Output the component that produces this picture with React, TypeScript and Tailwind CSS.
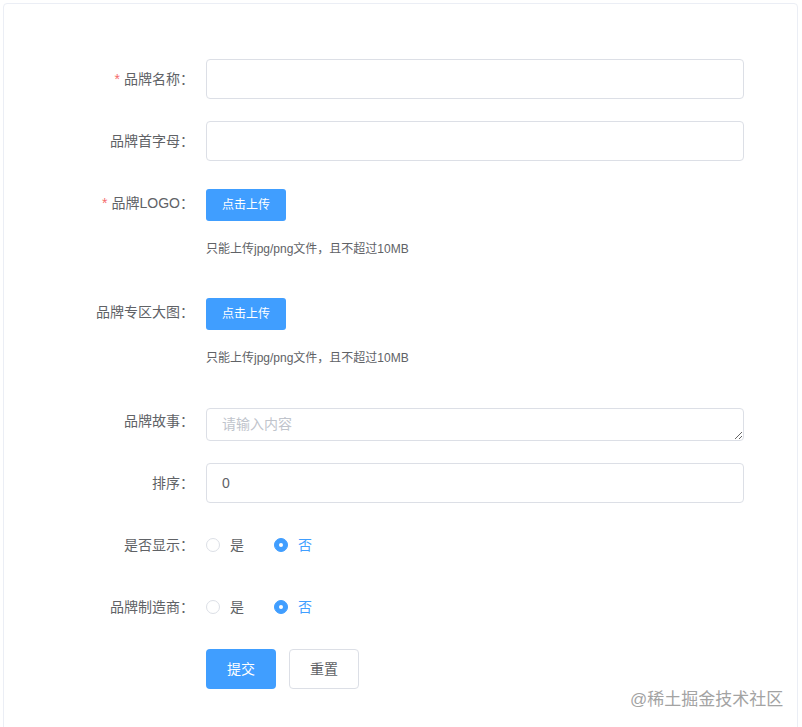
import React, { useState } from 'react'

const font = { fontFamily: '"Liberation Sans", "Noto Sans CJK SC", sans-serif' }

const Label: React.FC<{ text: string; required?: boolean }> = ({ text, required }) => (
  <label className="w-[150px] shrink-0 pr-3 text-right text-sm leading-[40px] text-[#606266]">
    {required && <span className="mr-1 text-[#f56c6c]">*</span>}
    {text}
  </label>
)

const TextInput: React.FC<{ value?: string }> = ({ value }) => (
  <input
    defaultValue={value}
    className="h-10 w-full rounded-[4px] border border-[#dcdfe6] px-[15px] text-sm text-[#606266] outline-none"
  />
)

const Upload: React.FC = () => (
  <div className="pt-[6px] pb-3">
    <button className="h-8 w-20 rounded-[3px] bg-[#409eff] text-xs text-white">点击上传</button>
    <div className="mt-[19px] text-xs leading-[18px] text-[#606266]">只能上传jpg/png文件，且不超过10MB</div>
  </div>
)

const RadioGroup: React.FC<{ initial: boolean }> = ({ initial }) => {
  const [val, setVal] = useState(initial)
  const opts = [
    { label: '是', v: true },
    { label: '否', v: false },
  ]
  return (
    <div className="flex h-10 items-center gap-[30px]">
      {opts.map((o) => {
        const on = val === o.v
        return (
          <button key={o.label} className="flex items-center" onClick={() => setVal(o.v)}>
            {on ? (
              <span className="flex h-[14px] w-[14px] items-center justify-center rounded-full border border-[#409eff] bg-[#409eff]">
                <span className="h-1 w-1 rounded-full bg-white" />
              </span>
            ) : (
              <span className="h-[14px] w-[14px] rounded-full border border-[#dcdfe6] bg-white" />
            )}
            <span className={'pl-[10px] text-sm ' + (on ? 'text-[#409eff]' : 'text-[#606266]')}>{o.label}</span>
          </button>
        )
      })}
    </div>
  )
}

export default function App() {
  return (
    <div className="relative min-h-[727px] bg-white" style={font}>
      <div className="ml-[3px] mt-[3px] h-[760px] w-[795px] rounded-[4px] border border-[#ebeef5] pl-[52px] pt-[55px]">
        <div className="flex flex-col gap-[22px]">
          <div className="flex">
            <Label text="品牌名称：" required />
            <div className="w-[538px]"><TextInput /></div>
          </div>
          <div className="flex">
            <Label text="品牌首字母：" />
            <div className="w-[538px]"><TextInput /></div>
          </div>
          <div className="flex">
            <Label text="品牌LOGO：" required />
            <Upload />
          </div>
          <div className="flex">
            <Label text="品牌专区大图：" />
            <Upload />
          </div>
          <div className="flex h-10">
            <Label text="品牌故事：" />
            <div className="w-[538px] pt-[7px]">
              <textarea
                rows={1}
                placeholder="请输入内容"
                className="block h-[33px] w-full rounded-[4px] border border-[#dcdfe6] px-[15px] py-[5px] text-sm leading-[21px] text-[#606266] outline-none placeholder:text-[#c0c4cc]"
              />
            </div>
          </div>
          <div className="flex">
            <Label text="排序：" />
            <div className="w-[538px]"><TextInput value="0" /></div>
          </div>
          <div className="flex">
            <Label text="是否显示：" />
            <RadioGroup initial={false} />
          </div>
          <div className="flex">
            <Label text="品牌制造商：" />
            <RadioGroup initial={false} />
          </div>
          <div className="flex">
            <div className="w-[150px] shrink-0" />
            <div className="flex gap-[13px]">
              <button className="h-10 w-[70px] rounded-[4px] bg-[#409eff] text-sm text-white">提交</button>
              <button className="h-10 w-[70px] rounded-[4px] border border-[#dcdfe6] bg-white text-sm text-[#606266]">重置</button>
            </div>
          </div>
        </div>
      </div>
      <div className="absolute left-[630px] top-[686px] text-[17px] leading-[22px] text-[#a3a3a3]">@稀土掘金技术社区</div>
    </div>
  )
}
